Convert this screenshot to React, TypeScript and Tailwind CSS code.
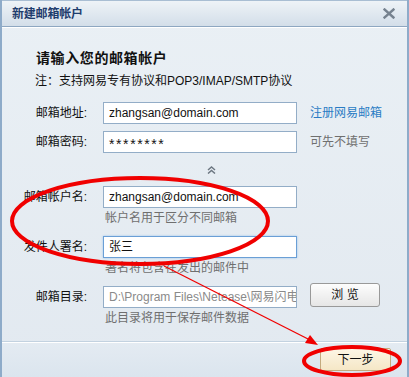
import React from "react";

const font = "font-['Liberation_Sans','Noto_Sans_CJK_SC',sans-serif]";

const Field = ({ value, muted, focused, secret }: { value: string; muted?: boolean; focused?: boolean; secret?: boolean }) => (
  <div
    className={`w-[194px] h-[22px] bg-white border px-[5px] leading-[20px] whitespace-nowrap overflow-hidden ${
      secret ? "text-[14px] tracking-[1.6px] pt-[2px]" : "text-[12px]"
    } ${focused ? "border-[#6a9fd6] shadow-[0_0_2px_#9cc3ec]" : "border-[#93adc7]"} ${
      muted ? "text-[#8a8a8a]" : "text-[#111]"
    }`}
  >
    {value}
  </div>
);

const Row = ({
  label,
  value,
  hint,
  side,
  muted,
  focused,
  secret,
}: {
  label: string;
  value: string;
  hint?: string;
  side?: React.ReactNode;
  muted?: boolean;
  focused?: boolean;
  secret?: boolean;
}) => (
  <div className="flex items-start">
    <div className="w-[85px] h-[22px] leading-[22px] text-right text-[12px] text-[#111]">{label}</div>
    <div className="ml-[16px] flex flex-col">
      <Field value={value} muted={muted} focused={focused} secret={secret} />
      {hint && <div className="h-[20px] leading-[20px] pl-[2px] text-[12px] text-[#6f6f6f]">{hint}</div>}
    </div>
    {side}
  </div>
);

export default function App() {
  return (
    <div className={`relative w-[409px] h-[377px] overflow-hidden border-x-2 border-[#8eabc9] bg-gradient-to-b from-[#eaf0f5] to-[#e2e9f0] ${font}`}>
      {/* title bar */}
      <div className="h-[27px] flex items-center justify-between pl-[10px] pr-[12px] bg-gradient-to-b from-[#eef3f7] to-[#d3dee9] border-t border-[#a9bed3] border-b border-b-[#8ea7c1] shadow-[0_1px_0_#fff]">
        <span className="text-[12px] font-bold text-[#1f3d6d] tracking-[-0.2px]">新建邮箱帐户</span>
        <svg width="12" height="11" viewBox="0 0 12 11" className="mt-[-1px]">
          <path d="M1.5 1.5 L10.5 9.5 M10.5 1.5 L1.5 9.5" stroke="#76828f" strokeWidth="2.4" strokeLinecap="square" />
        </svg>
      </div>

      {/* body */}
      <div className="flex flex-col">
        <div className="mt-[21px] pl-[34px] h-[20px] leading-[20px] text-[14px] font-bold tracking-[0.6px] text-[#111]">
          请输入您的邮箱帐户
        </div>
        <div className="mt-[3px] pl-[33px] h-[20px] leading-[20px] text-[12px] text-[#111]">
          注：支持网易专有协议和POP3/IMAP/SMTP协议
        </div>

        <div className="mt-[11px]">
          <Row
            label="邮箱地址:"
            value="zhangsan@domain.com"
            side={<span className="ml-[13px] h-[22px] leading-[22px] text-[12px] text-[#2a7cc4]">注册网易邮箱</span>}
          />
        </div>
        <div className="mt-[7px]">
          <Row
            label="邮箱密码:"
            value="********"
            secret
            side={<span className="ml-[13px] h-[22px] leading-[22px] text-[12px] text-[#6f6f6f]">可先不填写</span>}
          />
        </div>

        <div className="h-[33px] flex items-center pl-[205px]">
          <svg width="9" height="8" viewBox="0 0 9 8">
            <path d="M1 4 L4.5 1 L8 4 M1 7.5 L4.5 4.5 L8 7.5" stroke="#6d7782" strokeWidth="1.5" fill="none" />
          </svg>
        </div>

        <Row label="邮箱帐户名:" value="zhangsan@domain.com" hint="帐户名用于区分不同邮箱" />
        <div className="mt-[8px]">
          <Row label="发件人署名:" value="张三" hint="署名将包含在发出的邮件中" focused />
        </div>
        <div className="mt-[8px]">
          <Row
            label="邮箱目录:"
            value="D:\Program Files\Netease\网易闪电邮"
            hint="此目录将用于保存邮件数据"
            muted
            side={
              <button className="ml-[13px] mt-[-3px] w-[70px] h-[24px] rounded-[3px] border border-[#999] bg-gradient-to-b from-[#fdfdfd] to-[#e6e6e6] text-[12px] text-[#111]">
                浏 览
              </button>
            }
          />
        </div>
      </div>

      {/* footer */}
      <div className="absolute left-0 right-0 bottom-0 h-[36px] border-t border-[#c3d2e0] shadow-[inset_0_1px_0_#fff] bg-gradient-to-b from-[#e4ebf2] to-[#dbe5ee] flex items-center justify-end pr-[16px]">
        <button className="w-[71px] h-[23px] rounded-[2px] border border-[#c4ab7e] bg-gradient-to-b from-[#fdf6e6] to-[#f5e7c6] text-[12px] text-[#111]">
          下一步
        </button>
      </div>

      {/* red annotations */}
      <svg className="absolute inset-0 pointer-events-none" width="409" height="377" viewBox="-2 0 409 377">
        <ellipse cx="136" cy="221" rx="128" ry="43" fill="none" stroke="#f00000" strokeWidth="4" />
        <line x1="160" y1="266" x2="308" y2="341" stroke="#f00000" strokeWidth="1.3" />
        <path d="M314 345 L301 343 L306 335 Z" fill="#f00000" />
        <ellipse cx="348" cy="361" rx="48" ry="14" fill="none" stroke="#f00000" strokeWidth="4" />
      </svg>
    </div>
  );
}
